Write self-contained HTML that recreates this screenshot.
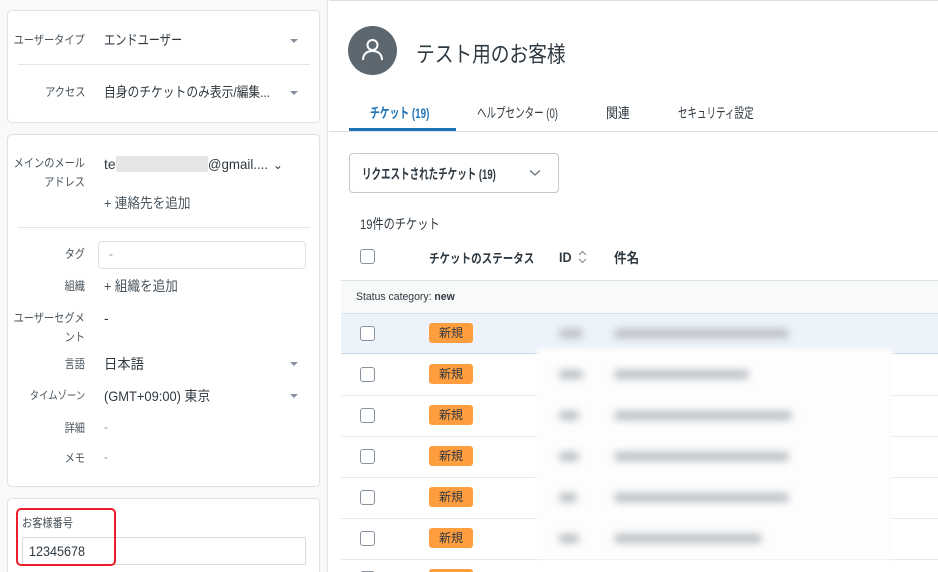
<!DOCTYPE html>
<html><head><meta charset="utf-8"><style>
*{box-sizing:border-box;margin:0;padding:0}
html,body{width:938px;height:572px;overflow:hidden}
body{background:#fff;font-family:"Liberation Sans","Noto Sans CJK JP",sans-serif;color:#2f3941;position:relative}
.left{position:absolute;left:0;top:0;width:328px;height:572px;background:#f8f9f9;border-right:1px solid #e3e5e8;overflow:hidden}
.card{position:absolute;left:7px;width:313px;background:#fff;border:1px solid #dfe1e4;border-radius:5px}
.lbl{position:absolute;right:234px;font-size:12px;color:#49545c;text-align:right;line-height:19px;white-space:nowrap}
.lbl span{display:inline-block;transform:scaleX(.85);transform-origin:right}
.val{position:absolute;left:103px;font-size:14px;color:#2f3941;line-height:18px;white-space:nowrap}
.s{display:inline-block;transform-origin:left;white-space:nowrap}
.car{position:absolute;left:289px;width:0;height:0;border-left:4px solid transparent;border-right:4px solid transparent;border-top:4px solid #87929d}
.sep{position:absolute;height:1px;background:#e3e5e8}
.abs{position:absolute;white-space:nowrap}
.right{position:absolute;left:329px;top:0;width:609px;height:572px;border-top:1px solid #dcdfe3;overflow:hidden}
.cb{position:absolute;left:31px;width:15px;height:15px;border:1.5px solid #87929d;border-radius:3px;background:#fff}
.badge{position:absolute;left:100px;width:44px;height:20px;background:#ff9d3f;border-radius:3px;font-size:12px;color:#2f3941;text-align:center;line-height:20px}
.blur{position:absolute;background:#b9bec3;filter:blur(4px);height:9px;border-radius:4px}
</style></head><body>
<div class="left">
 <div class="card" style="top:10px;height:113px">
  <div class="lbl" style="top:20px"><span>ユーザータイプ</span></div>
  <div class="val" style="top:20px;left:96px"><span class="s" style="transform:scaleX(.8)">エンドユーザー</span></div>
  <div class="car" style="top:28px;left:282px"></div>
  <div class="sep" style="top:53px;left:10px;width:292px"></div>
  <div class="lbl" style="top:72px"><span>アクセス</span></div>
  <div class="val" style="top:72px;left:96px"><span class="s" style="transform:scaleX(.84)">自身のチケットのみ表示/編集...</span></div>
  <div class="car" style="top:80px;left:282px"></div>
 </div>
 <div class="card" style="top:134px;height:353px">
  <div class="lbl" style="top:19px"><span>メインのメール</span><br><span>アドレス</span></div>
  <div class="val" style="top:20px;left:96px">te<span style="display:inline-block;width:92px;height:16px;background:#e6e6e6;vertical-align:-3px"></span><span class="s" style="transform:scaleX(.95)">@gmail....</span><span style="font-size:12px;margin-left:2px">⌄</span></div>
  <div class="val" style="top:59px;left:96px;color:#49545c"><span class="s" style="transform:scaleX(.9)">+ 連絡先を追加</span></div>
  <div class="sep" style="top:92px;left:10px;width:292px"></div>
  <div class="lbl" style="top:110px"><span>タグ</span></div>
  <div class="abs" style="left:90px;top:106px;width:208px;height:28px;border:1px solid #dfe1e4;border-radius:4px;font-size:12px;color:#87929d;padding:5px 10px">-</div>
  <div class="lbl" style="top:142px"><span>組織</span></div>
  <div class="val" style="top:142px;left:96px;color:#49545c"><span class="s" style="transform:scaleX(.9)">+ 組織を追加</span></div>
  <div class="lbl" style="top:174px"><span>ユーザーセグメ</span><br><span>ント</span></div>
  <div class="val" style="top:174px;left:96px">-</div>
  <div class="lbl" style="top:220px"><span>言語</span></div>
  <div class="val" style="top:220px;left:96px"><span class="s" style="transform:scaleX(.95)">日本語</span></div>
  <div class="car" style="top:227px;left:282px"></div>
  <div class="lbl" style="top:252px;font-size:11px"><span>タイムゾーン</span></div>
  <div class="val" style="top:252px;left:96px"><span class="s" style="transform:scaleX(.92)">(GMT+09:00) 東京</span></div>
  <div class="car" style="top:259px;left:282px"></div>
  <div class="lbl" style="top:284px"><span>詳細</span></div>
  <div class="val" style="top:283px;left:96px;color:#87929d;font-size:12px">-</div>
  <div class="lbl" style="top:314px"><span>メモ</span></div>
  <div class="val" style="top:313px;left:96px;color:#87929d;font-size:12px">-</div>
 </div>
 <div class="card" style="top:498px;height:90px"></div>
 <div class="abs" style="left:22px;top:514px;font-size:12px;color:#49545c"><span class="s" style="transform:scaleX(.85)">お客様番号</span></div>
 <div class="abs" style="left:22px;top:537px;width:284px;height:28px;border:1px solid #d8dcde;border-radius:2px;font-size:14px;padding:5px 6px"><span class="s" style="transform:scaleX(.9)">12345678</span></div>
 <div class="abs" style="left:16px;top:508px;width:100px;height:58px;border:2px solid #e8202a;border-radius:5px"></div>
</div>
<div class="right">
 <div class="abs" style="left:19px;top:25px;width:49px;height:49px;border-radius:50%;background:#5d6770">
  <svg width="49" height="49" viewBox="0 0 49 49"><circle cx="24.5" cy="19" r="5" fill="none" stroke="#fff" stroke-width="2"/><path d="M15 34c0-6 4-9 9.5-9s9.5 3 9.5 9" fill="none" stroke="#fff" stroke-width="2"/></svg>
 </div>
 <div class="abs" style="left:87px;top:36px;font-size:22px;color:#2f3941"><span class="s" style="transform:scaleX(.85)">テスト用のお客様</span></div>
 <div class="abs" style="left:41px;top:102px;font-size:14px;color:#1f73b7;font-weight:bold"><span class="s" style="transform:scaleX(.7)">チケット (19)</span></div>
 <div class="abs" style="left:20px;top:127px;width:107px;height:3px;background:#1f73b7"></div>
 <div class="abs" style="left:148px;top:102px;font-size:14px"><span class="s" style="transform:scaleX(.68)">ヘルプセンター (0)</span></div>
 <div class="abs" style="left:277px;top:102px;font-size:14px"><span class="s" style="transform:scaleX(.85)">関連</span></div>
 <div class="abs" style="left:349px;top:102px;font-size:14px"><span class="s" style="transform:scaleX(.68)">セキュリティ設定</span></div>
 <div class="abs" style="left:0;top:130px;width:609px;height:1px;background:#dcdfe3"></div>
 <div class="abs" style="left:20px;top:152px;width:210px;height:40px;border:1px solid #c2c8cc;border-radius:4px;font-size:14px;font-weight:bold;padding:10px 12px;color:#2f3941"><span class="s" style="transform:scaleX(.68)">リクエストされたチケット (19)</span></div>
 <svg class="abs" style="left:200px;top:168px" width="12" height="8" viewBox="0 0 12 8"><path d="M1 1.5l5 4.5 5-4.5" fill="none" stroke="#68737d" stroke-width="1.3"/></svg>
 <div class="abs" style="left:31px;top:213px;font-size:14px"><span class="s" style="transform:scaleX(.8)">19件のチケット</span></div>
 <div class="cb" style="top:248px"></div>
 <div class="abs" style="left:100px;top:247px;font-size:13px;font-weight:bold"><span class="s" style="transform:scaleX(.81)">チケットのステータス</span></div>
 <div class="abs" style="left:230px;top:248px;font-size:14px;font-weight:bold"><span class="s" style="transform:scaleX(.9)">ID</span></div>
 <svg class="abs" style="left:249px;top:249px" width="9" height="14" viewBox="0 0 9 14"><path d="M1 5l3.5-3.5L8 5M1 9l3.5 3.5L8 9" fill="none" stroke="#87929d" stroke-width="1.2"/></svg>
 <div class="abs" style="left:285px;top:247px;font-size:14px;font-weight:bold"><span class="s" style="transform:scaleX(.9)">件名</span></div>
 <div class="abs" style="left:12px;top:279px;width:597px;height:33px;background:#f8f9f9;border-top:1px solid #dcdfe3;font-size:11px;padding:10px 15px"><span class="s" style="transform:scaleX(.95)">Status category: <b>new</b></span></div>
 <div class="abs" style="left:12px;top:312px;width:597px;height:41px;background:#edf3fa;border-top:1px solid #d6e2f0;border-bottom:1px solid #c7d7ea"></div>
 <div class="abs" style="left:12px;top:394px;width:597px;height:1px;background:#e6e8eb"></div>
 <div class="abs" style="left:12px;top:435px;width:597px;height:1px;background:#e6e8eb"></div>
 <div class="abs" style="left:12px;top:476px;width:597px;height:1px;background:#e6e8eb"></div>
 <div class="abs" style="left:12px;top:517px;width:597px;height:1px;background:#e6e8eb"></div>
 <div class="abs" style="left:12px;top:558px;width:597px;height:1px;background:#e6e8eb"></div>
 <div class="abs" style="left:208px;top:348px;width:356px;height:210px;background:#fdfdfd;filter:blur(2px)"></div>
 <div class="cb" style="top:325px"></div><div class="badge" style="top:322px">新規</div>
 <div class="cb" style="top:366px"></div><div class="badge" style="top:363px">新規</div>
 <div class="cb" style="top:407px"></div><div class="badge" style="top:404px">新規</div>
 <div class="cb" style="top:448px"></div><div class="badge" style="top:445px">新規</div>
 <div class="cb" style="top:489px"></div><div class="badge" style="top:486px">新規</div>
 <div class="cb" style="top:530px"></div><div class="badge" style="top:527px">新規</div>
 <div class="cb" style="top:570px"></div><div class="badge" style="top:568px"></div>
 <div class="blur" style="left:230px;top:328px;width:24px"></div><div class="blur" style="left:285px;top:328px;width:175px"></div>
 <div class="blur" style="left:230px;top:369px;width:24px"></div><div class="blur" style="left:285px;top:369px;width:135px"></div>
 <div class="blur" style="left:230px;top:410px;width:20px"></div><div class="blur" style="left:285px;top:410px;width:178px"></div>
 <div class="blur" style="left:230px;top:451px;width:20px"></div><div class="blur" style="left:285px;top:451px;width:175px"></div>
 <div class="blur" style="left:230px;top:492px;width:18px"></div><div class="blur" style="left:285px;top:492px;width:175px"></div>
 <div class="blur" style="left:230px;top:533px;width:20px"></div><div class="blur" style="left:285px;top:533px;width:148px"></div>
</div>
</body></html>
